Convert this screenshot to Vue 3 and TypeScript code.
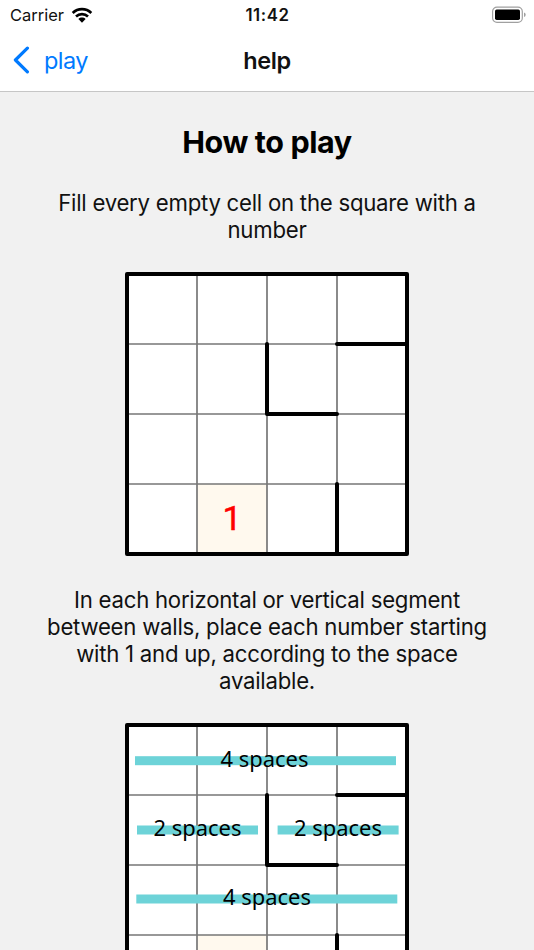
<script setup lang="ts">
interface Strip {
  x: number
  y: number
  width: number
  label: string
  labelX: number
}

interface Board {
  intro: string[]
  strips: Strip[]
  digit?: string
}

const gridLines: number[] = [72, 142, 212]

const walls: string[] = ['M142 72V142H212', 'M212 72H282', 'M212 212V282']

const strips: Strip[] = [
  { x: 10, y: 37.7, width: 261, label: '4 spaces', labelX: 95.5 },
  { x: 12, y: 107, width: 121, label: '2 spaces', labelX: 28.5 },
  { x: 152.6, y: 107, width: 121, label: '2 spaces', labelX: 169 },
  { x: 11.3, y: 176, width: 261, label: '4 spaces', labelX: 98 },
]

const boards: Board[] = [
  {
    intro: ['Fill every empty cell on the square with a', 'number'],
    strips: [],
    digit: '1',
  },
  {
    intro: [
      'In each horizontal or vertical segment',
      'between walls, place each number starting',
      'with 1 and up, according to the space',
      'available.',
    ],
    strips,
  },
]
</script>

<template>
  <div class="screen">
    <header class="top">
      <div class="status">
        <div class="carrier">
          <span>Carrier</span>
          <svg class="wifi" viewBox="0 0 22 17" width="22" height="17">
            <path d="M1.7 5.9C7 .9 15 .9 20.3 5.9" />
            <path d="M5 9.5C8.4 6.4 13.6 6.4 17 9.5" />
            <path class="dot" d="M7.4 12C9.4 10.1 12.6 10.1 14.6 12L11 15.8Z" />
          </svg>
        </div>
        <span class="clock">11:42</span>
        <svg class="battery" viewBox="0 0 36 18" width="36" height="18">
          <rect class="case" x="1.6" y="1.1" width="29.7" height="15.3" rx="4.4" />
          <rect x="4" y="3.5" width="25" height="10.5" rx="1.7" />
          <path class="cap" d="M33 6.6Q34.7 7.1 34.7 8.8T33 11Z" />
        </svg>
      </div>
      <nav class="nav">
        <a class="back">
          <svg viewBox="0 0 18 28" width="18" height="28">
            <path d="M14.4 2.2L2.4 14L14.4 25.8" />
          </svg>
          <span>play</span>
        </a>
        <span class="title">help</span>
      </nav>
    </header>
    <main class="content">
      <h1>How to play</h1>
      <template v-for="(board, i) in boards" :key="i">
        <p :class="['intro', `intro-${i + 1}`]">
          <span v-for="line in board.intro" :key="line">{{ line }}</span>
        </p>
        <svg class="board" viewBox="0 0 284 284" width="284" height="284">
          <rect class="paper" x="2" y="2" width="280" height="280" />
          <rect class="clue" x="72" y="212" width="70" height="70" />
          <path v-for="g in gridLines" :key="g" class="grid" :d="`M${g} 2V282M2 ${g}H282`" />
          <rect
            v-for="s in board.strips"
            :key="`${s.x}-${s.y}`"
            class="strip"
            :x="s.x"
            :y="s.y - 4.5"
            :width="s.width"
            height="9"
          />
          <path v-for="w in walls" :key="w" class="wall" :d="w" />
          <rect class="frame" x="2" y="2" width="280" height="280" />
          <text
            v-for="s in board.strips"
            :key="`${s.labelX}-${s.y}`"
            class="label"
            :x="s.labelX"
            :y="s.y + 5.8"
            textLength="88"
            lengthAdjust="spacingAndGlyphs"
          >{{ s.label }}</text>
          <text v-if="board.digit" class="digit" x="107" y="258">{{ board.digit }}</text>
        </svg>
      </template>
    </main>
  </div>
</template>

<style>
body {
  margin: 0;
  overflow: hidden;
}
</style>

<style scoped>
.screen {
  width: 534px;
  height: 950px;
  overflow: hidden;
  background: #f1f1f1;
  color: #111;
  font-family: Inter, "Liberation Sans", sans-serif;
}
.top {
  box-sizing: border-box;
  height: 92px;
  background: #fff;
  border-bottom: 1px solid #c6c6c6;
}
.status {
  display: grid;
  grid-template-columns: 1fr auto 1fr;
  align-items: center;
  height: 30px;
  padding: 0 9px 0 10px;
}
.carrier {
  display: flex;
  align-items: center;
  gap: 7px;
  font-size: 16.5px;
  letter-spacing: 0;
}
.wifi {
  fill: none;
  stroke: #000;
  stroke-width: 2.7;
}
.wifi .dot {
  fill: #000;
  stroke: none;
}
.clock {
  font-size: 16.8px;
  font-weight: 600;
  letter-spacing: 0.6px;
}
.battery {
  justify-self: end;
  margin-right: -2px;
  margin-top: -1px;
}
.battery .case {
  fill: none;
  stroke: #a0a0a0;
  stroke-width: 1.2;
}
.battery .cap {
  fill: #a0a0a0;
}
.nav {
  display: grid;
  grid-template-columns: 1fr auto 1fr;
  align-items: center;
  height: 60px;
  padding: 0 13px;
}
.back {
  display: flex;
  align-items: center;
  gap: 13px;
  color: #007aff;
  font-size: 23.5px;
  letter-spacing: -0.6px;
}
.back svg {
  fill: none;
  stroke: #007aff;
  stroke-width: 3.2;
  stroke-linecap: round;
  stroke-linejoin: round;
}
.title {
  font-size: 23.5px;
  font-weight: 600;
  letter-spacing: -0.4px;
}
.content {
  display: flex;
  flex-direction: column;
  align-items: center;
}
h1 {
  margin: 32px 0 29.4px;
  color: #000;
  font-size: 30.5px;
  line-height: 36px;
  font-weight: 700;
  letter-spacing: -0.4px;
}
.intro {
  display: flex;
  flex-direction: column;
  align-items: center;
  margin: 0;
  font-size: 22.2px;
  line-height: 27px;
  letter-spacing: -0.25px;
  white-space: nowrap;
}
.intro-1 {
  margin-bottom: 29px;
}
.intro-2 {
  margin: 29.6px 0 29px;
}
.board {
  display: block;
  flex: none;
}
.paper {
  fill: #fff;
}
.clue {
  fill: #fff9ee;
}
.grid {
  fill: none;
  stroke: #777;
  stroke-width: 1.7;
}
.wall,
.frame {
  fill: none;
  stroke: #000;
  stroke-width: 4;
  stroke-linecap: round;
  stroke-linejoin: round;
}
.strip {
  fill: #6dd3d8;
}
.label {
  fill: #000;
  font-family: "Noto Sans", sans-serif;
  font-size: 22.5px;
}
.digit {
  fill: #f00;
  stroke: #f00;
  stroke-width: 0.5;
  font-family: Roboto, sans-serif;
  font-size: 34px;
  text-anchor: middle;
}
</style>
